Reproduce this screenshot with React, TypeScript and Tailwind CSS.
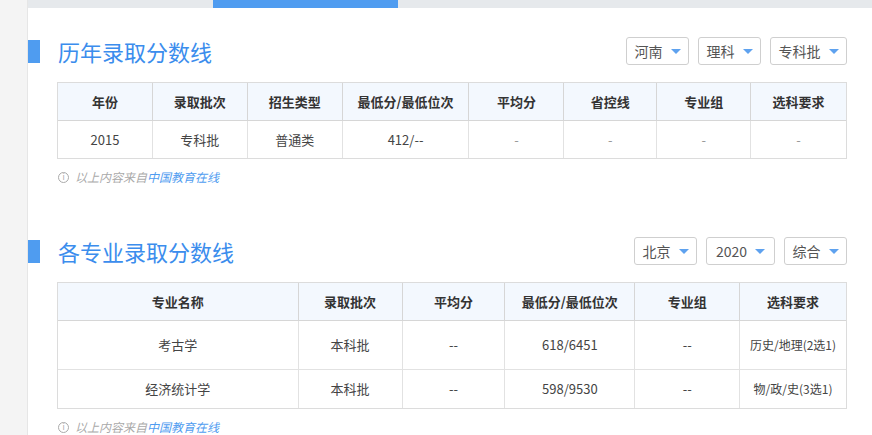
const F = { fontFamily: '"Noto Sans CJK SC","Noto Sans",sans-serif' };

function Drop({ label, w }: { label: string; w: string }) {
  return (
    <div className={`${w} h-[28px] border border-[#cfcfcf] rounded-[3px] flex items-center justify-center gap-[8px] text-[14px] text-[#555] bg-white`}>
      <span>{label}</span>
      <span className="w-0 h-0 border-l-[5px] border-r-[5px] border-t-[5px] border-l-transparent border-r-transparent border-t-[#5ea2ef]" />
    </div>
  );
}

function Title({ text }: { text: string }) {
  return (
    <div className="flex items-center">
      <div className="w-[12px] h-[23px] bg-[#4f9cf0]" />
      <div className="ml-[18px] text-[22px] text-[#3b8ded] leading-none">{text}</div>
    </div>
  );
}

function Note() {
  return (
    <div className="flex items-center gap-[6px] text-[12px] italic text-[#aaa] mt-[9px]">
      <span className="w-[11px] h-[11px] rounded-full border border-[#aaa] text-[8px] not-italic flex items-center justify-center leading-none">i</span>
      <span>以上内容来自<span className="text-[#4f9cf0]">中国教育在线</span></span>
    </div>
  );
}

export default function App() {
  const h1 = ["年份", "录取批次", "招生类型", "最低分/最低位次", "平均分", "省控线", "专业组", "选科要求"];
  const r1 = ["2015", "专科批", "普通类", "412/--", "-", "-", "-", "-"];
  const w1 = ["w-[95px]", "w-[95px]", "w-[95px]", "w-[127px]", "w-[95px]", "w-[93px]", "w-[94px]", "w-[95px]"];
  const w2 = ["w-[241px]", "w-[104px]", "w-[103px]", "w-[130px]", "w-[105px]", "w-[106px]"];
  const h2 = ["专业名称", "录取批次", "平均分", "最低分/最低位次", "专业组", "选科要求"];
  const rows2 = [
    { c: ["考古学", "本科批", "--", "618/6451", "--", "历史/地理(2选1)"], h: "h-[49px]" },
    { c: ["经济统计学", "本科批", "--", "598/9530", "--", "物/政/史(3选1)"], h: "h-[38px]" },
  ];
  return (
    <div style={F} className="w-[872px] h-[435px] flex bg-white overflow-hidden">
      <div className="w-[28px] bg-[#f4f4f4] border-r border-[#e6e6e6] shrink-0" />
      <div className="flex-1 flex flex-col">
        <div className="h-[8px] bg-[#e6e9ec] flex shrink-0">
          <div className="ml-[185px] w-[185px] bg-[#4f9cf0]" />
        </div>
        <div className="mt-[29px] flex items-center justify-between pr-[25px]">
          <Title text="历年录取分数线" />
          <div className="flex gap-[9px]">
            <Drop label="河南" w="w-[63px]" />
            <Drop label="理科" w="w-[63px]" />
            <Drop label="专科批" w="w-[77px]" />
          </div>
        </div>
        <div className="ml-[29px] mt-[17px] w-[790px] border border-[#dcdcdc] text-[13px]">
          <div className="flex h-[38px] bg-[#f3f8fe] border-b border-[#d6d6d6] font-bold text-[#333]">
            {h1.map((t, i) => (
              <div key={i} className={`${w1[i]} flex items-center justify-center ${i < 7 ? "border-r border-[#d6d6d6]" : ""}`}>{t}</div>
            ))}
          </div>
          <div className="flex h-[37px] text-[#444]">
            {r1.map((t, i) => (
              <div key={i} className={`${w1[i]} flex items-center justify-center ${i < 7 ? "border-r border-[#e2e2e2]" : ""} ${t === "-" ? "text-[#999]" : ""}`}>{t}</div>
            ))}
          </div>
        </div>
        <div className="ml-[30px]"><Note /></div>
        <div className="mt-[51px] flex items-center justify-between pr-[25px]">
          <Title text="各专业录取分数线" />
          <div className="flex gap-[9px]">
            <Drop label="北京" w="w-[63px]" />
            <Drop label="2020" w="w-[69px]" />
            <Drop label="综合" w="w-[63px]" />
          </div>
        </div>
        <div className="ml-[29px] mt-[17px] w-[790px] border border-[#dcdcdc] text-[13px] shrink-0">
          <div className="flex h-[38px] bg-[#f3f8fe] border-b border-[#d6d6d6] font-bold text-[#333]">
            {h2.map((t, i) => (
              <div key={i} className={`${w2[i]} flex items-center justify-center ${i < 5 ? "border-r border-[#d6d6d6]" : ""}`}>{t}</div>
            ))}
          </div>
          {rows2.map((r, j) => (
            <div key={j} className={`flex ${r.h} text-[#444] ${j === 0 ? "border-b border-[#e2e2e2]" : ""}`}>
              {r.c.map((t, i) => (
                <div key={i} className={`${w2[i]} flex items-center justify-center text-center leading-[24px] ${i === 5 ? "text-[12px] px-[8px]" : ""} ${i < 5 ? "border-r border-[#e2e2e2]" : ""}`}>{t}</div>
              ))}
            </div>
          ))}
        </div>
        <div className="ml-[30px]"><Note /></div>
      </div>
    </div>
  );
}
